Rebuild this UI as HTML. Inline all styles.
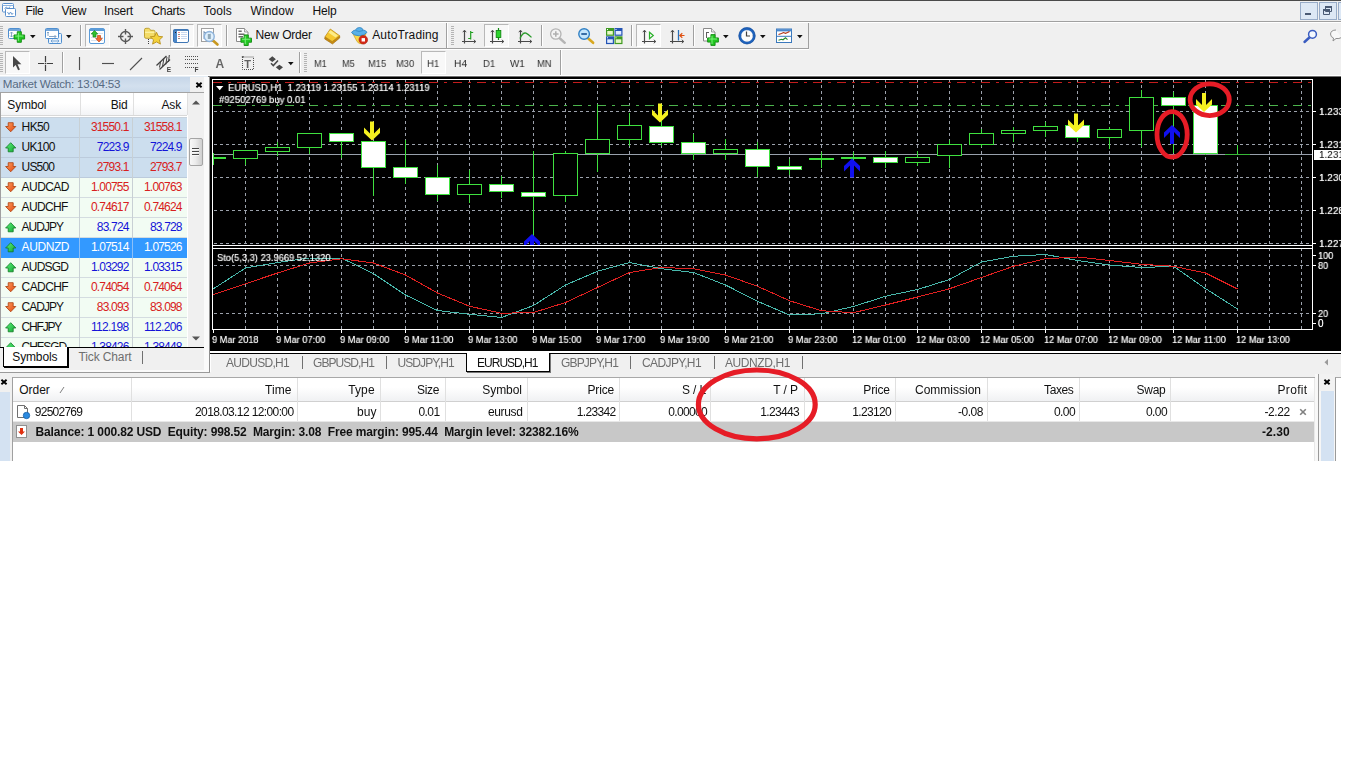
<!DOCTYPE html>
<html><head><meta charset="utf-8"><title>MetaTrader 4</title>
<style>
html,body{margin:0;padding:0;background:#fff;}
body{width:1360px;height:768px;overflow:hidden;position:relative;font-family:"Liberation Sans",sans-serif;}
#app{position:absolute;left:0;top:0;width:1341px;height:461px;background:#f0f0f0;overflow:hidden;}
.t{position:absolute;white-space:pre;}
.ct{text-shadow:0 0 .7px rgba(255,255,255,.75);}
.b{position:absolute;box-sizing:border-box;}
svg{position:absolute;overflow:visible;}
svg text{font-family:"Liberation Sans",sans-serif;}
</style></head><body><div id="app">
<div class="b " style="left:0px;top:0px;width:1341px;height:1px;background:#4a4a4a;"></div>
<div class="b " style="left:0px;top:21px;width:1341px;height:1px;background:#a0a0a0;"></div>
<div class="b " style="left:0px;top:22px;width:1341px;height:1px;background:#ffffff;"></div>
<div class="t " style="left:25.60px;top:4.00px;font-size:12px;line-height:14.00px;color:#111;letter-spacing:-0.434px;">File</div>
<div class="t " style="left:61.50px;top:4.00px;font-size:12px;line-height:14.00px;color:#111;letter-spacing:-0.323px;">View</div>
<div class="t " style="left:104.00px;top:4.00px;font-size:12px;line-height:14.00px;color:#111;letter-spacing:-0.169px;">Insert</div>
<div class="t " style="left:151.50px;top:4.00px;font-size:12px;line-height:14.00px;color:#111;letter-spacing:-0.307px;">Charts</div>
<div class="t " style="left:203.50px;top:4.00px;font-size:12px;line-height:14.00px;color:#111;letter-spacing:0.077px;">Tools</div>
<div class="t " style="left:250.60px;top:4.00px;font-size:12px;line-height:14.00px;color:#111;letter-spacing:0.087px;">Window</div>
<div class="t " style="left:312.50px;top:4.00px;font-size:12px;line-height:14.00px;color:#111;letter-spacing:-0.170px;">Help</div>
<div class="b " style="left:1300px;top:2px;width:18px;height:18px;background:#dde8f5;border:1px solid #98acc8;"></div>
<div class="b " style="left:1319px;top:2px;width:18px;height:18px;background:#dde8f5;border:1px solid #98acc8;"></div>
<div class="b " style="left:1338px;top:2px;width:6px;height:18px;background:#dde8f5;border:1px solid #98acc8;"></div>
<div class="b " style="left:1305px;top:13px;width:6px;height:2px;background:#4a5a74;"></div>
<svg style="left:1322px;top:5px" width="12" height="12"><path d="M3.5 1.5h6v5h-6z M1.5 4.5h6v5h-6z" fill="#dbe6f4" stroke="#4a5a74" stroke-width="1"/><path d="M3 2h7M1 5h7" stroke="#4a5a74" stroke-width="2"/></svg>
<div class="b " style="left:0px;top:48px;width:809px;height:1px;background:#a0a0a0;"></div>
<div class="b " style="left:0px;top:49px;width:809px;height:1px;background:#ffffff;"></div>
<div class="b " style="left:808px;top:23px;width:1px;height:26px;background:#a0a0a0;"></div>
<div class="b " style="left:560px;top:50px;width:1px;height:25px;background:#a0a0a0;"></div>
<div class="b " style="left:561px;top:50px;width:1px;height:25px;background:#ffffff;"></div>
<div class="b " style="left:0px;top:75px;width:1341px;height:1px;background:#ffffff;"></div>
<div class="b " style="left:0px;top:76px;width:208px;height:1px;background:#e4ecf4;"></div>
<div class="b " style="left:208px;top:76px;width:1133px;height:1px;background:#707070;"></div>
<div class="b " style="left:0px;top:26px;width:3px;height:1px;background:#b4b4b4;"></div>
<div class="b " style="left:0px;top:28px;width:3px;height:1px;background:#b4b4b4;"></div>
<div class="b " style="left:0px;top:30px;width:3px;height:1px;background:#b4b4b4;"></div>
<div class="b " style="left:0px;top:32px;width:3px;height:1px;background:#b4b4b4;"></div>
<div class="b " style="left:0px;top:34px;width:3px;height:1px;background:#b4b4b4;"></div>
<div class="b " style="left:0px;top:36px;width:3px;height:1px;background:#b4b4b4;"></div>
<div class="b " style="left:0px;top:38px;width:3px;height:1px;background:#b4b4b4;"></div>
<div class="b " style="left:0px;top:40px;width:3px;height:1px;background:#b4b4b4;"></div>
<div class="b " style="left:0px;top:42px;width:3px;height:1px;background:#b4b4b4;"></div>
<div class="b " style="left:0px;top:44px;width:3px;height:1px;background:#b4b4b4;"></div>
<div class="b " style="left:451px;top:26px;width:3px;height:1px;background:#b4b4b4;"></div>
<div class="b " style="left:451px;top:28px;width:3px;height:1px;background:#b4b4b4;"></div>
<div class="b " style="left:451px;top:30px;width:3px;height:1px;background:#b4b4b4;"></div>
<div class="b " style="left:451px;top:32px;width:3px;height:1px;background:#b4b4b4;"></div>
<div class="b " style="left:451px;top:34px;width:3px;height:1px;background:#b4b4b4;"></div>
<div class="b " style="left:451px;top:36px;width:3px;height:1px;background:#b4b4b4;"></div>
<div class="b " style="left:451px;top:38px;width:3px;height:1px;background:#b4b4b4;"></div>
<div class="b " style="left:451px;top:40px;width:3px;height:1px;background:#b4b4b4;"></div>
<div class="b " style="left:451px;top:42px;width:3px;height:1px;background:#b4b4b4;"></div>
<div class="b " style="left:451px;top:44px;width:3px;height:1px;background:#b4b4b4;"></div>
<div class="b " style="left:0px;top:53px;width:3px;height:1px;background:#b4b4b4;"></div>
<div class="b " style="left:0px;top:55px;width:3px;height:1px;background:#b4b4b4;"></div>
<div class="b " style="left:0px;top:57px;width:3px;height:1px;background:#b4b4b4;"></div>
<div class="b " style="left:0px;top:59px;width:3px;height:1px;background:#b4b4b4;"></div>
<div class="b " style="left:0px;top:61px;width:3px;height:1px;background:#b4b4b4;"></div>
<div class="b " style="left:0px;top:63px;width:3px;height:1px;background:#b4b4b4;"></div>
<div class="b " style="left:0px;top:65px;width:3px;height:1px;background:#b4b4b4;"></div>
<div class="b " style="left:0px;top:67px;width:3px;height:1px;background:#b4b4b4;"></div>
<div class="b " style="left:0px;top:69px;width:3px;height:1px;background:#b4b4b4;"></div>
<div class="b " style="left:0px;top:71px;width:3px;height:1px;background:#b4b4b4;"></div>
<div class="b " style="left:304px;top:53px;width:3px;height:1px;background:#b4b4b4;"></div>
<div class="b " style="left:304px;top:55px;width:3px;height:1px;background:#b4b4b4;"></div>
<div class="b " style="left:304px;top:57px;width:3px;height:1px;background:#b4b4b4;"></div>
<div class="b " style="left:304px;top:59px;width:3px;height:1px;background:#b4b4b4;"></div>
<div class="b " style="left:304px;top:61px;width:3px;height:1px;background:#b4b4b4;"></div>
<div class="b " style="left:304px;top:63px;width:3px;height:1px;background:#b4b4b4;"></div>
<div class="b " style="left:304px;top:65px;width:3px;height:1px;background:#b4b4b4;"></div>
<div class="b " style="left:304px;top:67px;width:3px;height:1px;background:#b4b4b4;"></div>
<div class="b " style="left:304px;top:69px;width:3px;height:1px;background:#b4b4b4;"></div>
<div class="b " style="left:304px;top:71px;width:3px;height:1px;background:#b4b4b4;"></div>
<div class="b " style="left:80px;top:25px;width:1px;height:21px;background:#a0a0a0;"></div>
<div class="b " style="left:81px;top:25px;width:1px;height:21px;background:#ffffff;"></div>
<div class="b " style="left:226px;top:25px;width:1px;height:21px;background:#a0a0a0;"></div>
<div class="b " style="left:227px;top:25px;width:1px;height:21px;background:#ffffff;"></div>
<div class="b " style="left:541px;top:25px;width:1px;height:21px;background:#a0a0a0;"></div>
<div class="b " style="left:542px;top:25px;width:1px;height:21px;background:#ffffff;"></div>
<div class="b " style="left:631px;top:25px;width:1px;height:21px;background:#a0a0a0;"></div>
<div class="b " style="left:632px;top:25px;width:1px;height:21px;background:#ffffff;"></div>
<div class="b " style="left:693px;top:25px;width:1px;height:21px;background:#a0a0a0;"></div>
<div class="b " style="left:694px;top:25px;width:1px;height:21px;background:#ffffff;"></div>
<div class="b " style="left:446px;top:23px;width:1px;height:25px;background:#a0a0a0;"></div>
<div class="b " style="left:447px;top:23px;width:1px;height:25px;background:#ffffff;"></div>
<div class="b " style="left:62px;top:52px;width:1px;height:21px;background:#a0a0a0;"></div>
<div class="b " style="left:63px;top:52px;width:1px;height:21px;background:#ffffff;"></div>
<div class="b " style="left:299px;top:52px;width:1px;height:21px;background:#a0a0a0;"></div>
<div class="b " style="left:300px;top:52px;width:1px;height:21px;background:#ffffff;"></div>
<div class="b " style="left:85px;top:24px;width:25px;height:23px;background:#f8f8f8;border:1px solid #b8b8b8;border-right-color:#fff;border-bottom-color:#fff;"></div>
<div class="b " style="left:170px;top:24px;width:24px;height:23px;background:#f8f8f8;border:1px solid #b8b8b8;border-right-color:#fff;border-bottom-color:#fff;"></div>
<div class="b " style="left:197px;top:24px;width:25px;height:23px;background:#f8f8f8;border:1px solid #b8b8b8;border-right-color:#fff;border-bottom-color:#fff;"></div>
<div class="b " style="left:484px;top:24px;width:25px;height:23px;background:#f8f8f8;border:1px solid #b8b8b8;border-right-color:#fff;border-bottom-color:#fff;"></div>
<div class="b " style="left:636px;top:24px;width:25px;height:23px;background:#f8f8f8;border:1px solid #b8b8b8;border-right-color:#fff;border-bottom-color:#fff;"></div>
<div class="b " style="left:5px;top:51px;width:25px;height:23px;background:#f8f8f8;border:1px solid #b8b8b8;border-right-color:#fff;border-bottom-color:#fff;"></div>
<div class="b " style="left:421px;top:51px;width:25px;height:23px;background:#f8f8f8;border:1px solid #b8b8b8;border-right-color:#fff;border-bottom-color:#fff;"></div>
<div class="t " style="left:255.60px;top:28.00px;font-size:12px;line-height:14.00px;color:#111;letter-spacing:-0.190px;">New Order</div>
<div class="t " style="left:372.20px;top:28.00px;font-size:12px;line-height:14.00px;color:#111;letter-spacing:0.143px;">AutoTrading</div>
<div class="t " style="left:314.00px;top:58.00px;font-size:10px;line-height:11.00px;color:#2c2c2c;will-change:transform;transform:scale(0.9214,0.8750);transform-origin:0 9px;">M1</div>
<div class="t " style="left:342.00px;top:58.00px;font-size:10px;line-height:11.00px;color:#2c2c2c;will-change:transform;transform:scale(0.9214,0.8750);transform-origin:0 9px;">M5</div>
<div class="t " style="left:367.70px;top:58.00px;font-size:10px;line-height:11.00px;color:#2c2c2c;will-change:transform;transform:scale(0.9304,0.8750);transform-origin:0 9px;">M15</div>
<div class="t " style="left:396.20px;top:58.00px;font-size:10px;line-height:11.00px;color:#2c2c2c;will-change:transform;transform:scale(0.9304,0.8750);transform-origin:0 9px;">M30</div>
<div class="t " style="left:426.70px;top:58.00px;font-size:10px;line-height:11.00px;color:#2c2c2c;will-change:transform;transform:scale(0.9465,0.8750);transform-origin:0 9px;">H1</div>
<div class="t " style="left:453.70px;top:58.00px;font-size:10px;line-height:11.00px;color:#2c2c2c;will-change:transform;transform:scale(1.0248,0.8750);transform-origin:0 9px;">H4</div>
<div class="t " style="left:483.20px;top:58.00px;font-size:10px;line-height:11.00px;color:#2c2c2c;will-change:transform;transform:scale(0.9465,0.8750);transform-origin:0 9px;">D1</div>
<div class="t " style="left:510.20px;top:58.00px;font-size:10px;line-height:11.00px;color:#2c2c2c;will-change:transform;transform:scale(0.9733,0.8750);transform-origin:0 9px;">W1</div>
<div class="t " style="left:537.20px;top:58.00px;font-size:10px;line-height:11.00px;color:#2c2c2c;will-change:transform;transform:scale(0.9388,0.8750);transform-origin:0 9px;">MN</div>
<svg style="left:30px;top:35px" width="6" height="4"><path d="M0 0h5.600l-2.800 3.200z" fill="#111"/></svg>
<svg style="left:66px;top:35px" width="6" height="4"><path d="M0 0h5.600l-2.800 3.200z" fill="#111"/></svg>
<svg style="left:722.7px;top:35px" width="6" height="4"><path d="M0 0h5.600l-2.800 3.200z" fill="#111"/></svg>
<svg style="left:760px;top:35px" width="6" height="4"><path d="M0 0h5.600l-2.800 3.200z" fill="#111"/></svg>
<svg style="left:797px;top:35px" width="6" height="4"><path d="M0 0h5.600l-2.800 3.200z" fill="#111"/></svg>
<svg style="left:287.8px;top:62px" width="6" height="4"><path d="M0 0h5.600l-2.800 3.200z" fill="#111"/></svg>
<svg style="left:1300px;top:26px" width="41" height="20"><path d="M10.500 10.500l-6 5.500" stroke="#3a5cc0" stroke-width="2.400" stroke-linecap="round"/><circle cx="12.500" cy="8.300" r="3.900" fill="#f4f8ff" stroke="#3a5cc0" stroke-width="1.500"/><path d="M36 4q-5 0-5.500 4q0 3 3 4l-.5 3 3-2.500q3 .5 5.500-1" fill="#f8f8f8" stroke="#909090" stroke-width="1"/></svg>
<svg style="left:0;top:0" width="1341" height="78"><g stroke="#5a8fcc" fill="#fff" stroke-width="1"><rect x="2.5" y="3.5" width="11" height="8.5" rx="1"/><path d="M2.5 5.5h11" stroke="#8db4e0"/><path d="M4.5 8.5l2-1.5 1.5 2 2-2.5" fill="none" stroke-width=".9"/><rect x="5.5" y="8.5" width="10" height="8" rx="1"/><path d="M7.5 12l1.5 2.5 1.5-2.5 1.5 2.5 1.2-1.5" fill="none" stroke-width=".9"/></g><rect x="8.5" y="28.5" width="12" height="10" rx="1" fill="#fff" stroke="#4f8fd0"/><path d="M8.5 30h12" stroke="#4f8fd0" stroke-width="1.6"/><path d="M11.5 32v5M10 33.5l1.5-1.5 1.5 1.5M10 35.5l1.5 1.5 1.5-1.5" stroke="#7a9cc0" fill="none" stroke-width=".9"/><path d="M17.25 31.7h4.1v3.25h3.25v4.1h-3.25v3.25h-4.1v-3.25h-3.25v-4.1h3.25z" fill="#22c822" stroke="#128a12" stroke-width=".9"/><path d="M15.2 36.05h8M18.35 32.9v8" stroke="#7cf07c" stroke-width="1" fill="none"/><rect x="48.5" y="33.5" width="13" height="10" rx="1" fill="#e8f2fc" stroke="#4f8fd0"/><path d="M51 41h8M51 41l1.5-1.5M51 41l1.5 1.5M59 41l-1.5-1.5M59 41l-1.5 1.5" stroke="#6f9fd0" stroke-width=".9" fill="none"/><rect x="45.5" y="28.5" width="13" height="10" rx="1" fill="#fff" stroke="#4f8fd0"/><path d="M45.500 30h13" stroke="#4f8fd0" stroke-width="1.6"/><path d="M48 32v4M47 33l1-1 1 1M49 36.500h7M56 36.500l-1.500-1.500M56 36.500l-1.500 1.500" stroke="#7a9cc0" stroke-width=".9" fill="none"/><rect x="89.500" y="28.500" width="15" height="15" rx="1.500" fill="#fff" stroke="#5b9bd8"/><path d="M89.500 30h15" stroke="#5b9bd8" stroke-width="2"/><path d="M91 37.500h12M91 40.500h12M98 33.500h5" stroke="#d8e2ee" stroke-width="1"/><path d="M93 37v-3h-1.800l3.300-3.500 3.300 3.500h-1.800v3z" fill="#2fc02f" stroke="#188a18" stroke-width=".7"/><path d="M97.500 35.500v3h-1.800l3.300 3.500 3.300-3.500h-1.800v-3z" fill="#f46a30" stroke="#c04818" stroke-width=".7"/><g stroke="#585858" fill="none"><circle cx="125.500" cy="36.500" r="5" stroke-width="1.300"/><path d="M118 36.500h5.500M127.500 36.500h5.500M125.500 29v5.500M125.500 38.500v5.500" stroke-width="1.400"/></g><path d="M144.500 29.800q0-1.500 1.500-1.500h2.500q1 0 1.500 1l.5 1h3q1.500 0 1.500 1.500v5q0 1.500-1.500 1.500h-7.500q-1.500 0-1.500-1.500z" fill="#f4dc68" stroke="#b89a2a" stroke-width=".9"/><path d="M145 32.300h9.500" stroke="#fdf3a8" stroke-width="1.200"/><path d="M156.500 32.300l1.900 4 4.300.5-3.200 3 .9 4.300-3.900-2.200-3.900 2.200.9-4.300-3.200-3 4.300-.5z" fill="#f4d23c" stroke="#b8901c" stroke-width=".9"/><path d="M148.500 39v1M148.500 41v1M148.500 43v1" stroke="#404040" stroke-width="1"/><rect x="173.500" y="29.500" width="15" height="13" rx="1.500" fill="#fff" stroke="#3f76b4"/><rect x="174" y="30" width="3" height="12" fill="#4a86c8"/><path d="M173.500 30.200h15" stroke="#3f76b4" stroke-width="1.400"/><path d="M181 32.500h6M181 34.500h6M181 36.500h6M181 38.500h6" stroke="#c8d8f0" stroke-width="1"/><path d="M178.500 32.500h1M178.500 36.500h1" stroke="#d02020" stroke-width="1.200"/><path d="M178.500 34.500h1M178.500 38.500h1M175 32.500h1" stroke="#202020" stroke-width="1.200"/><rect x="201.500" y="28.500" width="12" height="13" fill="#fff" stroke="#a0a0a0"/><path d="M204 31v8M204 32.500h7M210 31l1.500 1.500-1.500 1.500" stroke="#7090b0" fill="none" stroke-width=".9"/><path d="M213 40.500l4.500 4" stroke="#c89820" stroke-width="2.600" stroke-linecap="round"/><circle cx="209.300" cy="36.500" r="5" fill="#d8ecfc" fill-opacity=".85" stroke="#8fb4dc" stroke-width="1.300"/><rect x="207.800" y="34" width="3" height="5" fill="#90a8b8"/><path d="M236.5 28.5h8l3.500 3.500v9.5h-11.5z" fill="#fff" stroke="#8a8a8a" stroke-width="1"/><path d="M244.5 28.5v3.500h3.500" fill="#e8e8e8" stroke="#8a8a8a" stroke-width=".8"/><path d="M238.500 31.300h3.200M238.500 34.300h6M238.500 36.800h4.500" stroke="#6c6c6c" stroke-width="1.500"/><path d="M244.15 34.9h4.1v3.25h3.25v4.1h-3.25v3.25h-4.1v-3.25h-3.25v-4.1h3.25z" fill="#22c822" stroke="#128a12" stroke-width=".9"/><path d="M242.1 39.25h8M245.25 36.1v8" stroke="#7cf07c" stroke-width="1" fill="none"/><path d="M325 36.800l7.200 4.700 7.500-5.700v2.200l-7.200 6-7.800-5z" fill="#c88c12" stroke="#9a6808" stroke-width=".6" stroke-linejoin="round"/><path d="M330.300 29l9.400 6.800-7.500 5.700-7.200-4.700z" fill="#f6c830" stroke="#b88410" stroke-width=".7" stroke-linejoin="round"/><path d="M330.600 30.300l7.300 5.300-2.300 1.800-7.300-4.800z" fill="#fdec88"/><path d="M352.500 33l4.500 8.500q2 3 5.500 2l3.500-10z" fill="#f8d84a" stroke="#d0a020" stroke-width=".7"/><path d="M351.500 32.500q1-2 4-2.500q1-2.500 4-2.500t3.500 2.500q3 .3 4 2.300q-2.500 3.500-7.800 3.500t-7.700-3.300z" fill="#58b0e8" stroke="#2a80c0" stroke-width=".8"/><path d="M355.500 30.500q3.500 2 7.500 0" stroke="#2a80c0" fill="none" stroke-width=".7"/><circle cx="363.300" cy="39.800" r="4.300" fill="#d42818" stroke="#a81808" stroke-width=".6"/><rect x="361.600" y="38.100" width="3.400" height="3.400" fill="#fff"/><g stroke="#484848" fill="none" stroke-width="1.200"><path d="M464.5 30.500v13M462 41.5h13.500"/><path d="M462.8 32.200l1.700-2 1.700 2M473.8 39.8l2 1.700-2 1.700" stroke-width="1"/></g><path d="M470.700 31v8.500M470.700 32.500h2.500M470.700 38.500h-2.500" stroke="#22a022" stroke-width="1.200" fill="none"/><g stroke="#484848" fill="none" stroke-width="1.200"><path d="M492.5 30.500v13M490 41.5h13.500"/><path d="M490.8 32.200l1.700-2 1.700 2M501.8 39.8l2 1.700-2 1.700" stroke-width="1"/></g><path d="M498.500 28v12" stroke="#128a12" stroke-width="1.200"/><rect x="496.200" y="30.500" width="4.600" height="7" fill="#2cd42c" stroke="#128a12" stroke-width=".9"/><g stroke="#484848" fill="none" stroke-width="1.200"><path d="M520.5 30.500v13M518 41.5h13.500"/><path d="M518.8 32.200l1.700-2 1.700 2M529.8 39.8l2 1.700-2 1.700" stroke-width="1"/></g><path d="M520 38.500q3-6.500 6-5.300q2 .8 5.500 4.200" stroke="#2a9a2a" stroke-width="1.300" fill="none"/><path d="M560 38.500l4.800 4.300" stroke="#b4b4b4" stroke-width="2.400" stroke-linecap="round"/><circle cx="555.800" cy="34" r="5.200" fill="#f4f4f4" stroke="#b4b4b4" stroke-width="1.300"/><path d="M553 34h5.600M555.800 31.200v5.600" stroke="#b0b0b0" stroke-width="1.600"/><path d="M588.300 38.500l4.800 4.300" stroke="#d8a820" stroke-width="2.600" stroke-linecap="round"/><circle cx="584.100" cy="34" r="5.300" fill="#c4e6fc" stroke="#3080c4" stroke-width="1.400"/><path d="M581.300 34h5.600" stroke="#28609c" stroke-width="1.800"/><rect x="606" y="28" width="8" height="7.800" fill="#3f9a22"/><rect x="607.2" y="31" width="5.600" height="3.600" fill="#e8f8c8"/><rect x="607" y="29" width="1" height="1" fill="#fff"/><rect x="614.5" y="28" width="8" height="7.800" fill="#2454b4"/><rect x="615.7" y="31" width="5.600" height="3.600" fill="#e0ecff"/><rect x="615.5" y="29" width="1" height="1" fill="#fff"/><rect x="606" y="36.3" width="8" height="7.800" fill="#2454b4"/><rect x="607.2" y="39.3" width="5.600" height="3.600" fill="#e0ecff"/><rect x="607" y="37.3" width="1" height="1" fill="#fff"/><rect x="614.5" y="36.3" width="8" height="7.800" fill="#3f9a22"/><rect x="615.7" y="39.3" width="5.600" height="3.600" fill="#e8f8c8"/><rect x="615.5" y="37.3" width="1" height="1" fill="#fff"/><g stroke="#484848" fill="none" stroke-width="1.200"><path d="M644.5 30.500v13M642 41.5h13.500"/><path d="M642.8 32.200l1.700-2 1.700 2M653.8 39.8l2 1.700-2 1.700" stroke-width="1"/></g><path d="M649.500 32.200l3.800 3.300-3.800 3.300z" fill="none" stroke="#28b028" stroke-width="1.200"/><g stroke="#484848" fill="none" stroke-width="1.200"><path d="M672.5 30.500v13M670 41.5h13.500"/><path d="M670.8 32.200l1.700-2 1.700 2M681.8 39.8l2 1.700-2 1.700" stroke-width="1"/></g><path d="M678.500 30v10.500" stroke="#2a70b8" stroke-width="1.300"/><path d="M684.500 35.500h-4.500M682.300 33.200l-2.500 2.300 2.500 2.300" stroke="#e05010" stroke-width="1.200" fill="none"/><path d="M703.5 28.5h8l3.500 3.500v9h-11.5z" fill="#fff" stroke="#8a8a8a" stroke-width="1"/><path d="M711.5 28.5v3.500h3.500" fill="#e8e8e8" stroke="#8a8a8a" stroke-width=".8"/><path d="M706.500 32v6M706.500 32.500h2.500" stroke="#606060" stroke-width="1" fill="none"/><path d="M710.9 34.6h4.2v3.3h3.3v4.2h-3.3v3.3h-4.2v-3.3h-3.3v-4.2h3.3z" fill="#22c822" stroke="#128a12" stroke-width=".9"/><path d="M708.8 39h8.2M712 35.8v8.2" stroke="#7cf07c" stroke-width="1" fill="none"/><circle cx="747" cy="35.800" r="7.200" fill="#fcfcfc" stroke="#1e62bc" stroke-width="2.600"/><circle cx="747" cy="35.800" r="8.200" fill="none" stroke="#164a94" stroke-width=".5"/><path d="M746.500 31.500v4.500h3.500" stroke="#404040" stroke-width="1.200" fill="none"/><path d="M747 29.800v1M747 40.800v1M741 35.800h1M752 35.800h1" stroke="#a0a8b8" stroke-width=".9"/><rect x="776.500" y="29" width="15" height="13.500" fill="#fff" stroke="#3a78bc" stroke-width="1"/><path d="M776.500 30.300h15" stroke="#4a88cc" stroke-width="2.200"/><path d="M776.500 36.300h15" stroke="#3a78bc" stroke-width="1"/><path d="M778.500 34.500l3-1 2-1 2 .8 2-.8 2-1" stroke="#b03010" stroke-width="1.100" fill="none"/><path d="M778.500 40.300l3-1 1.500.5 2.500-2 2 1.800" stroke="#2a8a2a" stroke-width="1.100" fill="none"/><path d="M13 56v11.500l2.700-2.600 2.400 5.300 1.800-.8-2.400-5.200h3.900z" fill="#484848"/><path d="M38 63.500h6.300M46.700 63.500h6.300M45.500 56v6.300M45.500 64.700v6.300" stroke="#404040" stroke-width="1.200"/><rect x="45" y="63" width="1" height="1" fill="#404040"/><path d="M79.500 57v13" stroke="#505050" stroke-width="1.150"/><path d="M102 63.500h12" stroke="#505050" stroke-width="1.150"/><path d="M130 70l12-12" stroke="#505050" stroke-width="1.100"/><g stroke="#404040" stroke-width="1.300" fill="none"><path d="M156.500 65.500l10-9.500M159.500 69.500l10.500-10"/><path d="M159.500 67.500l1.200-6.500M162.500 66.500l1.400-8M165.800 64.500l1.200-7.500M168.500 62l.8-7" stroke-width="1"/></g><text x="166.800" y="72.200" font-size="6.500" font-weight="bold" fill="#404040">E</text><path d="M185 56.5H198" stroke="#505050" stroke-width="1" stroke-dasharray="1 1"/><path d="M185 59.5H198" stroke="#505050" stroke-width="1" stroke-dasharray="1 1"/><path d="M185 63.5H198" stroke="#505050" stroke-width="1" stroke-dasharray="1 1"/><path d="M185 67.5H194" stroke="#505050" stroke-width="1" stroke-dasharray="1 1"/><text x="194.600" y="72" font-size="6.500" font-weight="bold" fill="#404040">F</text><text x="215.500" y="67.600" font-size="12" font-weight="bold" fill="#666">A</text><rect x="242.500" y="57" width="11" height="12.500" fill="none" stroke="#505050" stroke-width="1" stroke-dasharray="1 1"/><rect x="241.800" y="56.200" width="2" height="1.300" fill="#505050"/><text x="244.200" y="67.600" font-size="11" font-weight="bold" fill="#606060">T</text><path d="M272.300 56.300l3.600 3-3.600 2.600-3.600-2.600zM279.400 70.300l3.600-3-3.600-2.600-3.600 2.600z" fill="#484848"/><path d="M271 63.300l2.300 2.300 4.700-5.200" stroke="#484848" stroke-width="1.500" fill="none"/></svg>
<svg width="0" height="0" style="left:0;top:0"><defs><linearGradient id="gd" x1="0" y1="0" x2="1" y2="1"><stop offset="0" stop-color="#ff9a5c"/><stop offset="1" stop-color="#e04a10"/></linearGradient><linearGradient id="gu" x1="0" y1="0" x2="1" y2="1"><stop offset="0" stop-color="#5cf07c"/><stop offset="1" stop-color="#14a834"/></linearGradient></defs></svg>
<div class="b" style="left:0;top:77px;width:190px;height:15px;background:linear-gradient(#c6d6e8,#d3e0ee 60%,#cbdaea);"></div>
<div class="b " style="left:190px;top:77px;width:19px;height:15px;background:#f0f0f0;"></div>
<div class="t " style="left:2.80px;top:78.00px;font-size:11.6px;line-height:12.00px;color:#566a82;letter-spacing:-0.237px;">Market Watch: 13:04:53</div>
<svg style="left:194.1px;top:79.5px" width="10" height="10"><path d="M2.4 2.7L7.6 7.3M7.6 2.7L2.4 7.3" stroke="#000" stroke-width="1.9" fill="none"/></svg>
<div class="b " style="left:0px;top:92px;width:206px;height:280px;background:#ffffff;"></div>
<div class="b " style="left:0px;top:92px;width:204px;height:1px;background:#a4a4a4;"></div>
<div class="b " style="left:0px;top:92px;width:1px;height:280px;background:#a0a0a0;"></div>
<div class="b " style="left:204px;top:77px;width:5px;height:295px;background:#fafafa;"></div>
<div class="b " style="left:209px;top:77px;width:1px;height:296px;background:#8e8e8e;"></div>
<div class="b" style="left:1px;top:93px;width:186px;height:23px;background:linear-gradient(#ffffff,#ffffff 45%,#f3f4f6);border-bottom:1px solid #d8d8d8;"></div>
<div class="b " style="left:80px;top:93px;width:1px;height:22px;background:#e0e0e0;"></div>
<div class="b " style="left:133px;top:93px;width:1px;height:22px;background:#e0e0e0;"></div>
<div class="b " style="left:187px;top:93px;width:1px;height:22px;background:#e0e0e0;"></div>
<div class="b " style="left:1px;top:117px;width:186px;height:1px;background:#c8d2dc;"></div>
<div class="t " style="left:7.30px;top:98.00px;font-size:12px;line-height:14.00px;color:#111;letter-spacing:-0.169px;">Symbol</div>
<div class="t " style="left:110.80px;top:98.00px;font-size:12px;line-height:14.00px;color:#111;letter-spacing:-0.281px;">Bid</div>
<div class="t " style="left:161.50px;top:98.00px;font-size:12px;line-height:14.00px;color:#111;letter-spacing:-0.168px;">Ask</div>
<div class="b" style="left:1px;top:118px;width:186px;height:229px;overflow:hidden;">
<div class="b " style="left:0px;top:0px;width:186px;height:20px;background:#ccdeee;"></div>
<div class="b " style="left:0px;top:19px;width:186px;height:1px;background:#bccbdc;"></div>
<div class="b " style="left:78px;top:0px;width:1px;height:20px;background:#c8d0d4;"></div>
<div class="b " style="left:131px;top:0px;width:1px;height:20px;background:#c8d0d4;"></div>
<div class="t " style="left:20.60px;top:2.00px;font-size:12px;line-height:14.00px;color:#111;letter-spacing:-0.629px;">HK50</div>
<div class="t " style="left:89.90px;top:2.00px;font-size:12px;line-height:14.00px;color:#d82020;letter-spacing:-0.811px;">31550.1</div>
<div class="t " style="left:143.00px;top:2.00px;font-size:12px;line-height:14.00px;color:#d82020;letter-spacing:-0.811px;">31558.1</div>
<svg style="left:4px;top:4px" width="12" height="11"><path d="M3.200 .700h5v3.800h2.600L5.700 9.800 .600 4.500h2.600z" fill="url(#gd)" stroke="#a83c0c" stroke-width=".8" stroke-linejoin="round"/></svg>
<div class="b " style="left:0px;top:20px;width:186px;height:20px;background:#ccdeee;"></div>
<div class="b " style="left:0px;top:39px;width:186px;height:1px;background:#bccbdc;"></div>
<div class="b " style="left:78px;top:20px;width:1px;height:20px;background:#c8d0d4;"></div>
<div class="b " style="left:131px;top:20px;width:1px;height:20px;background:#c8d0d4;"></div>
<div class="t " style="left:20.60px;top:22.00px;font-size:12px;line-height:14.00px;color:#111;letter-spacing:-0.738px;">UK100</div>
<div class="t " style="left:95.85px;top:22.00px;font-size:12px;line-height:14.00px;color:#1414d8;letter-spacing:-0.826px;">7223.9</div>
<div class="t " style="left:148.95px;top:22.00px;font-size:12px;line-height:14.00px;color:#1414d8;letter-spacing:-0.826px;">7224.9</div>
<svg style="left:4px;top:24px" width="12" height="11"><path d="M3.200 9.800h5V6h2.600L5.700 .700 .600 6h2.600z" fill="url(#gu)" stroke="#0e7a22" stroke-width=".8" stroke-linejoin="round"/></svg>
<div class="b " style="left:0px;top:40px;width:186px;height:20px;background:#ccdeee;"></div>
<div class="b " style="left:0px;top:59px;width:186px;height:1px;background:#bccbdc;"></div>
<div class="b " style="left:78px;top:40px;width:1px;height:20px;background:#c8d0d4;"></div>
<div class="b " style="left:131px;top:40px;width:1px;height:20px;background:#c8d0d4;"></div>
<div class="t " style="left:20.60px;top:42.00px;font-size:12px;line-height:14.00px;color:#111;letter-spacing:-0.838px;">US500</div>
<div class="t " style="left:95.85px;top:42.00px;font-size:12px;line-height:14.00px;color:#d82020;letter-spacing:-0.826px;">2793.1</div>
<div class="t " style="left:148.95px;top:42.00px;font-size:12px;line-height:14.00px;color:#d82020;letter-spacing:-0.826px;">2793.7</div>
<svg style="left:4px;top:44px" width="12" height="11"><path d="M3.200 .700h5v3.800h2.600L5.700 9.800 .600 4.500h2.600z" fill="url(#gd)" stroke="#a83c0c" stroke-width=".8" stroke-linejoin="round"/></svg>
<div class="b " style="left:0px;top:60px;width:186px;height:20px;background:#f2fcf3;"></div>
<div class="b " style="left:0px;top:79px;width:186px;height:1px;background:#d4dce0;"></div>
<div class="b " style="left:78px;top:60px;width:1px;height:20px;background:#c8d0d4;"></div>
<div class="b " style="left:131px;top:60px;width:1px;height:20px;background:#c8d0d4;"></div>
<div class="t " style="left:20.60px;top:62.00px;font-size:12px;line-height:14.00px;color:#111;letter-spacing:-0.562px;">AUDCAD</div>
<div class="t " style="left:89.90px;top:62.00px;font-size:12px;line-height:14.00px;color:#d82020;letter-spacing:-0.811px;">1.00755</div>
<div class="t " style="left:143.00px;top:62.00px;font-size:12px;line-height:14.00px;color:#d82020;letter-spacing:-0.811px;">1.00763</div>
<svg style="left:4px;top:64px" width="12" height="11"><path d="M3.200 .700h5v3.800h2.600L5.700 9.800 .600 4.500h2.600z" fill="url(#gd)" stroke="#a83c0c" stroke-width=".8" stroke-linejoin="round"/></svg>
<div class="b " style="left:0px;top:80px;width:186px;height:20px;background:#f2fcf3;"></div>
<div class="b " style="left:0px;top:99px;width:186px;height:1px;background:#d4dce0;"></div>
<div class="b " style="left:78px;top:80px;width:1px;height:20px;background:#c8d0d4;"></div>
<div class="b " style="left:131px;top:80px;width:1px;height:20px;background:#c8d0d4;"></div>
<div class="t " style="left:20.60px;top:82.00px;font-size:12px;line-height:14.00px;color:#111;letter-spacing:-0.666px;">AUDCHF</div>
<div class="t " style="left:89.90px;top:82.00px;font-size:12px;line-height:14.00px;color:#d82020;letter-spacing:-0.811px;">0.74617</div>
<div class="t " style="left:143.00px;top:82.00px;font-size:12px;line-height:14.00px;color:#d82020;letter-spacing:-0.811px;">0.74624</div>
<svg style="left:4px;top:84px" width="12" height="11"><path d="M3.200 .700h5v3.800h2.600L5.700 9.800 .600 4.500h2.600z" fill="url(#gd)" stroke="#a83c0c" stroke-width=".8" stroke-linejoin="round"/></svg>
<div class="b " style="left:0px;top:100px;width:186px;height:20px;background:#f2fcf3;"></div>
<div class="b " style="left:0px;top:119px;width:186px;height:1px;background:#d4dce0;"></div>
<div class="b " style="left:78px;top:100px;width:1px;height:20px;background:#c8d0d4;"></div>
<div class="b " style="left:131px;top:100px;width:1px;height:20px;background:#c8d0d4;"></div>
<div class="t " style="left:20.60px;top:102.00px;font-size:12px;line-height:14.00px;color:#111;letter-spacing:-0.974px;">AUDJPY</div>
<div class="t " style="left:95.85px;top:102.00px;font-size:12px;line-height:14.00px;color:#1414d8;letter-spacing:-0.826px;">83.724</div>
<div class="t " style="left:148.95px;top:102.00px;font-size:12px;line-height:14.00px;color:#1414d8;letter-spacing:-0.826px;">83.728</div>
<svg style="left:4px;top:104px" width="12" height="11"><path d="M3.200 9.800h5V6h2.600L5.700 .700 .600 6h2.600z" fill="url(#gu)" stroke="#0e7a22" stroke-width=".8" stroke-linejoin="round"/></svg>
<div class="b " style="left:0px;top:120px;width:186px;height:20px;background:#3399ff;"></div>
<div class="b " style="left:78px;top:120px;width:1px;height:20px;background:#8cc0f8;"></div>
<div class="b " style="left:131px;top:120px;width:1px;height:20px;background:#8cc0f8;"></div>
<div class="t " style="left:20.60px;top:122.00px;font-size:12px;line-height:14.00px;color:#ffffff;letter-spacing:-0.416px;">AUDNZD</div>
<div class="t " style="left:89.90px;top:122.00px;font-size:12px;line-height:14.00px;color:#ffffff;letter-spacing:-0.811px;">1.07514</div>
<div class="t " style="left:143.00px;top:122.00px;font-size:12px;line-height:14.00px;color:#ffffff;letter-spacing:-0.811px;">1.07526</div>
<svg style="left:4px;top:124px" width="12" height="11"><path d="M3.200 9.800h5V6h2.600L5.700 .700 .600 6h2.600z" fill="url(#gu)" stroke="#0e7a22" stroke-width=".8" stroke-linejoin="round"/></svg>
<div class="b " style="left:0px;top:140px;width:186px;height:20px;background:#f2fcf3;"></div>
<div class="b " style="left:0px;top:159px;width:186px;height:1px;background:#d4dce0;"></div>
<div class="b " style="left:78px;top:140px;width:1px;height:20px;background:#c8d0d4;"></div>
<div class="b " style="left:131px;top:140px;width:1px;height:20px;background:#c8d0d4;"></div>
<div class="t " style="left:20.60px;top:142.00px;font-size:12px;line-height:14.00px;color:#111;letter-spacing:-0.807px;">AUDSGD</div>
<div class="t " style="left:89.90px;top:142.00px;font-size:12px;line-height:14.00px;color:#1414d8;letter-spacing:-0.811px;">1.03292</div>
<div class="t " style="left:143.00px;top:142.00px;font-size:12px;line-height:14.00px;color:#1414d8;letter-spacing:-0.811px;">1.03315</div>
<svg style="left:4px;top:144px" width="12" height="11"><path d="M3.200 9.800h5V6h2.600L5.700 .700 .600 6h2.600z" fill="url(#gu)" stroke="#0e7a22" stroke-width=".8" stroke-linejoin="round"/></svg>
<div class="b " style="left:0px;top:160px;width:186px;height:20px;background:#f2fcf3;"></div>
<div class="b " style="left:0px;top:179px;width:186px;height:1px;background:#d4dce0;"></div>
<div class="b " style="left:78px;top:160px;width:1px;height:20px;background:#c8d0d4;"></div>
<div class="b " style="left:131px;top:160px;width:1px;height:20px;background:#c8d0d4;"></div>
<div class="t " style="left:20.60px;top:162.00px;font-size:12px;line-height:14.00px;color:#111;letter-spacing:-0.583px;">CADCHF</div>
<div class="t " style="left:89.90px;top:162.00px;font-size:12px;line-height:14.00px;color:#d82020;letter-spacing:-0.811px;">0.74054</div>
<div class="t " style="left:143.00px;top:162.00px;font-size:12px;line-height:14.00px;color:#d82020;letter-spacing:-0.811px;">0.74064</div>
<svg style="left:4px;top:164px" width="12" height="11"><path d="M3.200 .700h5v3.800h2.600L5.700 9.800 .600 4.500h2.600z" fill="url(#gd)" stroke="#a83c0c" stroke-width=".8" stroke-linejoin="round"/></svg>
<div class="b " style="left:0px;top:180px;width:186px;height:20px;background:#f2fcf3;"></div>
<div class="b " style="left:0px;top:199px;width:186px;height:1px;background:#d4dce0;"></div>
<div class="b " style="left:78px;top:180px;width:1px;height:20px;background:#c8d0d4;"></div>
<div class="b " style="left:131px;top:180px;width:1px;height:20px;background:#c8d0d4;"></div>
<div class="t " style="left:20.60px;top:182.00px;font-size:12px;line-height:14.00px;color:#111;letter-spacing:-0.974px;">CADJPY</div>
<div class="t " style="left:95.85px;top:182.00px;font-size:12px;line-height:14.00px;color:#d82020;letter-spacing:-0.826px;">83.093</div>
<div class="t " style="left:148.95px;top:182.00px;font-size:12px;line-height:14.00px;color:#d82020;letter-spacing:-0.826px;">83.098</div>
<svg style="left:4px;top:184px" width="12" height="11"><path d="M3.200 .700h5v3.800h2.600L5.700 9.800 .600 4.500h2.600z" fill="url(#gd)" stroke="#a83c0c" stroke-width=".8" stroke-linejoin="round"/></svg>
<div class="b " style="left:0px;top:200px;width:186px;height:20px;background:#f2fcf3;"></div>
<div class="b " style="left:0px;top:219px;width:186px;height:1px;background:#d4dce0;"></div>
<div class="b " style="left:78px;top:200px;width:1px;height:20px;background:#c8d0d4;"></div>
<div class="b " style="left:131px;top:200px;width:1px;height:20px;background:#c8d0d4;"></div>
<div class="t " style="left:20.60px;top:202.00px;font-size:12px;line-height:14.00px;color:#111;letter-spacing:-1.195px;">CHFJPY</div>
<div class="t " style="left:89.90px;top:202.00px;font-size:12px;line-height:14.00px;color:#1414d8;letter-spacing:-0.684px;">112.198</div>
<div class="t " style="left:143.00px;top:202.00px;font-size:12px;line-height:14.00px;color:#1414d8;letter-spacing:-0.684px;">112.206</div>
<svg style="left:4px;top:204px" width="12" height="11"><path d="M3.200 9.800h5V6h2.600L5.700 .700 .600 6h2.600z" fill="url(#gu)" stroke="#0e7a22" stroke-width=".8" stroke-linejoin="round"/></svg>
<div class="b " style="left:0px;top:220px;width:186px;height:20px;background:#f2fcf3;"></div>
<div class="b " style="left:0px;top:239px;width:186px;height:1px;background:#d4dce0;"></div>
<div class="b " style="left:78px;top:220px;width:1px;height:20px;background:#c8d0d4;"></div>
<div class="b " style="left:131px;top:220px;width:1px;height:20px;background:#c8d0d4;"></div>
<div class="t " style="left:20.60px;top:222.00px;font-size:12px;line-height:14.00px;color:#111;letter-spacing:-1.028px;">CHFSGD</div>
<div class="t " style="left:89.90px;top:222.00px;font-size:12px;line-height:14.00px;color:#1414d8;letter-spacing:-0.811px;">1.38426</div>
<div class="t " style="left:143.00px;top:222.00px;font-size:12px;line-height:14.00px;color:#1414d8;letter-spacing:-0.811px;">1.38448</div>
<svg style="left:4px;top:224px" width="12" height="11"><path d="M3.200 9.800h5V6h2.600L5.700 .700 .600 6h2.600z" fill="url(#gu)" stroke="#0e7a22" stroke-width=".8" stroke-linejoin="round"/></svg>
</div>
<div class="b " style="left:188px;top:93px;width:16px;height:254px;background:#f0f0f0;"></div>
<svg style="left:192px;top:100px" width="8" height="5"><path d="M0 4.5l4-4 4 4z" fill="#555"/></svg>
<svg style="left:192px;top:336px" width="8" height="5"><path d="M0 .5l4 4 4-4z" fill="#555"/></svg>
<div class="b" style="left:189px;top:138px;width:14px;height:28px;border:1px solid #a4a4a4;border-radius:2px;background:linear-gradient(90deg,#f8f8f8,#ececec 45%,#cfcfcf);"></div>
<div class="b " style="left:192px;top:148px;width:7px;height:1px;background:#484848;"></div>
<div class="b " style="left:192px;top:149px;width:7px;height:1px;background:#fafafa;"></div>
<div class="b " style="left:192px;top:151px;width:7px;height:1px;background:#484848;"></div>
<div class="b " style="left:192px;top:152px;width:7px;height:1px;background:#fafafa;"></div>
<div class="b " style="left:192px;top:154px;width:7px;height:1px;background:#484848;"></div>
<div class="b " style="left:192px;top:155px;width:7px;height:1px;background:#fafafa;"></div>
<div class="b " style="left:0px;top:347px;width:204px;height:1px;background:#000;"></div>
<div class="b " style="left:0px;top:348px;width:204px;height:22px;background:#f0f0f0;"></div>
<div class="b" style="left:3px;top:347px;width:65px;height:20px;background:#fff;border:1px solid #000;border-top:none;box-shadow:1px 1px 0 #000;"></div>
<div class="t " style="left:12.30px;top:350.00px;font-size:12px;line-height:14.00px;color:#111;letter-spacing:-0.145px;">Symbols</div>
<div class="t " style="left:78.50px;top:350.00px;font-size:12px;line-height:14.00px;color:#6e6e6e;letter-spacing:-0.123px;">Tick Chart</div>
<div class="b " style="left:142px;top:351px;width:1px;height:13px;background:#707070;"></div>
<div class="b " style="left:0px;top:370px;width:209px;height:2px;background:#fafafa;"></div>
<div class="b " style="left:0px;top:372px;width:210px;height:1px;background:#9a9a9a;"></div>
<svg style="left:0;top:0" width="1341" height="461" shape-rendering="crispEdges"><rect x="210" y="77" width="1131" height="274" fill="#000"/><line x1="245.5" y1="79" x2="245.5" y2="245" stroke="#9ca2ac" stroke-width="1" stroke-dasharray="3 3" /><line x1="245.5" y1="248" x2="245.5" y2="330" stroke="#9ca2ac" stroke-width="1" stroke-dasharray="3 3" /><line x1="277.5" y1="79" x2="277.5" y2="245" stroke="#9ca2ac" stroke-width="1" stroke-dasharray="3 3" /><line x1="277.5" y1="248" x2="277.5" y2="330" stroke="#9ca2ac" stroke-width="1" stroke-dasharray="3 3" /><line x1="309.5" y1="79" x2="309.5" y2="245" stroke="#9ca2ac" stroke-width="1" stroke-dasharray="3 3" /><line x1="309.5" y1="248" x2="309.5" y2="330" stroke="#9ca2ac" stroke-width="1" stroke-dasharray="3 3" /><line x1="341.5" y1="79" x2="341.5" y2="245" stroke="#9ca2ac" stroke-width="1" stroke-dasharray="3 3" /><line x1="341.5" y1="248" x2="341.5" y2="330" stroke="#9ca2ac" stroke-width="1" stroke-dasharray="3 3" /><line x1="373.5" y1="79" x2="373.5" y2="245" stroke="#9ca2ac" stroke-width="1" stroke-dasharray="3 3" /><line x1="373.5" y1="248" x2="373.5" y2="330" stroke="#9ca2ac" stroke-width="1" stroke-dasharray="3 3" /><line x1="405.5" y1="79" x2="405.5" y2="245" stroke="#9ca2ac" stroke-width="1" stroke-dasharray="3 3" /><line x1="405.5" y1="248" x2="405.5" y2="330" stroke="#9ca2ac" stroke-width="1" stroke-dasharray="3 3" /><line x1="437.5" y1="79" x2="437.5" y2="245" stroke="#9ca2ac" stroke-width="1" stroke-dasharray="3 3" /><line x1="437.5" y1="248" x2="437.5" y2="330" stroke="#9ca2ac" stroke-width="1" stroke-dasharray="3 3" /><line x1="469.5" y1="79" x2="469.5" y2="245" stroke="#9ca2ac" stroke-width="1" stroke-dasharray="3 3" /><line x1="469.5" y1="248" x2="469.5" y2="330" stroke="#9ca2ac" stroke-width="1" stroke-dasharray="3 3" /><line x1="501.5" y1="79" x2="501.5" y2="245" stroke="#9ca2ac" stroke-width="1" stroke-dasharray="3 3" /><line x1="501.5" y1="248" x2="501.5" y2="330" stroke="#9ca2ac" stroke-width="1" stroke-dasharray="3 3" /><line x1="533.5" y1="79" x2="533.5" y2="245" stroke="#9ca2ac" stroke-width="1" stroke-dasharray="3 3" /><line x1="533.5" y1="248" x2="533.5" y2="330" stroke="#9ca2ac" stroke-width="1" stroke-dasharray="3 3" /><line x1="565.5" y1="79" x2="565.5" y2="245" stroke="#9ca2ac" stroke-width="1" stroke-dasharray="3 3" /><line x1="565.5" y1="248" x2="565.5" y2="330" stroke="#9ca2ac" stroke-width="1" stroke-dasharray="3 3" /><line x1="597.5" y1="79" x2="597.5" y2="245" stroke="#9ca2ac" stroke-width="1" stroke-dasharray="3 3" /><line x1="597.5" y1="248" x2="597.5" y2="330" stroke="#9ca2ac" stroke-width="1" stroke-dasharray="3 3" /><line x1="629.5" y1="79" x2="629.5" y2="245" stroke="#9ca2ac" stroke-width="1" stroke-dasharray="3 3" /><line x1="629.5" y1="248" x2="629.5" y2="330" stroke="#9ca2ac" stroke-width="1" stroke-dasharray="3 3" /><line x1="661.5" y1="79" x2="661.5" y2="245" stroke="#9ca2ac" stroke-width="1" stroke-dasharray="3 3" /><line x1="661.5" y1="248" x2="661.5" y2="330" stroke="#9ca2ac" stroke-width="1" stroke-dasharray="3 3" /><line x1="693.5" y1="79" x2="693.5" y2="245" stroke="#9ca2ac" stroke-width="1" stroke-dasharray="3 3" /><line x1="693.5" y1="248" x2="693.5" y2="330" stroke="#9ca2ac" stroke-width="1" stroke-dasharray="3 3" /><line x1="725.5" y1="79" x2="725.5" y2="245" stroke="#9ca2ac" stroke-width="1" stroke-dasharray="3 3" /><line x1="725.5" y1="248" x2="725.5" y2="330" stroke="#9ca2ac" stroke-width="1" stroke-dasharray="3 3" /><line x1="757.5" y1="79" x2="757.5" y2="245" stroke="#9ca2ac" stroke-width="1" stroke-dasharray="3 3" /><line x1="757.5" y1="248" x2="757.5" y2="330" stroke="#9ca2ac" stroke-width="1" stroke-dasharray="3 3" /><line x1="789.5" y1="79" x2="789.5" y2="245" stroke="#9ca2ac" stroke-width="1" stroke-dasharray="3 3" /><line x1="789.5" y1="248" x2="789.5" y2="330" stroke="#9ca2ac" stroke-width="1" stroke-dasharray="3 3" /><line x1="821.5" y1="79" x2="821.5" y2="245" stroke="#9ca2ac" stroke-width="1" stroke-dasharray="3 3" /><line x1="821.5" y1="248" x2="821.5" y2="330" stroke="#9ca2ac" stroke-width="1" stroke-dasharray="3 3" /><line x1="853.5" y1="79" x2="853.5" y2="245" stroke="#9ca2ac" stroke-width="1" stroke-dasharray="3 3" /><line x1="853.5" y1="248" x2="853.5" y2="330" stroke="#9ca2ac" stroke-width="1" stroke-dasharray="3 3" /><line x1="885.5" y1="79" x2="885.5" y2="245" stroke="#9ca2ac" stroke-width="1" stroke-dasharray="3 3" /><line x1="885.5" y1="248" x2="885.5" y2="330" stroke="#9ca2ac" stroke-width="1" stroke-dasharray="3 3" /><line x1="917.5" y1="79" x2="917.5" y2="245" stroke="#9ca2ac" stroke-width="1" stroke-dasharray="3 3" /><line x1="917.5" y1="248" x2="917.5" y2="330" stroke="#9ca2ac" stroke-width="1" stroke-dasharray="3 3" /><line x1="949.5" y1="79" x2="949.5" y2="245" stroke="#9ca2ac" stroke-width="1" stroke-dasharray="3 3" /><line x1="949.5" y1="248" x2="949.5" y2="330" stroke="#9ca2ac" stroke-width="1" stroke-dasharray="3 3" /><line x1="981.5" y1="79" x2="981.5" y2="245" stroke="#9ca2ac" stroke-width="1" stroke-dasharray="3 3" /><line x1="981.5" y1="248" x2="981.5" y2="330" stroke="#9ca2ac" stroke-width="1" stroke-dasharray="3 3" /><line x1="1013.5" y1="79" x2="1013.5" y2="245" stroke="#9ca2ac" stroke-width="1" stroke-dasharray="3 3" /><line x1="1013.5" y1="248" x2="1013.5" y2="330" stroke="#9ca2ac" stroke-width="1" stroke-dasharray="3 3" /><line x1="1045.5" y1="79" x2="1045.5" y2="245" stroke="#9ca2ac" stroke-width="1" stroke-dasharray="3 3" /><line x1="1045.5" y1="248" x2="1045.5" y2="330" stroke="#9ca2ac" stroke-width="1" stroke-dasharray="3 3" /><line x1="1077.5" y1="79" x2="1077.5" y2="245" stroke="#9ca2ac" stroke-width="1" stroke-dasharray="3 3" /><line x1="1077.5" y1="248" x2="1077.5" y2="330" stroke="#9ca2ac" stroke-width="1" stroke-dasharray="3 3" /><line x1="1109.5" y1="79" x2="1109.5" y2="245" stroke="#9ca2ac" stroke-width="1" stroke-dasharray="3 3" /><line x1="1109.5" y1="248" x2="1109.5" y2="330" stroke="#9ca2ac" stroke-width="1" stroke-dasharray="3 3" /><line x1="1141.5" y1="79" x2="1141.5" y2="245" stroke="#9ca2ac" stroke-width="1" stroke-dasharray="3 3" /><line x1="1141.5" y1="248" x2="1141.5" y2="330" stroke="#9ca2ac" stroke-width="1" stroke-dasharray="3 3" /><line x1="1173.5" y1="79" x2="1173.5" y2="245" stroke="#9ca2ac" stroke-width="1" stroke-dasharray="3 3" /><line x1="1173.5" y1="248" x2="1173.5" y2="330" stroke="#9ca2ac" stroke-width="1" stroke-dasharray="3 3" /><line x1="1205.5" y1="79" x2="1205.5" y2="245" stroke="#9ca2ac" stroke-width="1" stroke-dasharray="3 3" /><line x1="1205.5" y1="248" x2="1205.5" y2="330" stroke="#9ca2ac" stroke-width="1" stroke-dasharray="3 3" /><line x1="1237.5" y1="79" x2="1237.5" y2="245" stroke="#9ca2ac" stroke-width="1" stroke-dasharray="3 3" /><line x1="1237.5" y1="248" x2="1237.5" y2="330" stroke="#9ca2ac" stroke-width="1" stroke-dasharray="3 3" /><line x1="1269.5" y1="79" x2="1269.5" y2="245" stroke="#9ca2ac" stroke-width="1" stroke-dasharray="3 3" /><line x1="1269.5" y1="248" x2="1269.5" y2="330" stroke="#9ca2ac" stroke-width="1" stroke-dasharray="3 3" /><line x1="1301.5" y1="79" x2="1301.5" y2="245" stroke="#9ca2ac" stroke-width="1" stroke-dasharray="3 3" /><line x1="1301.5" y1="248" x2="1301.5" y2="330" stroke="#9ca2ac" stroke-width="1" stroke-dasharray="3 3" /><line x1="214" y1="111.5" x2="1312" y2="111.5" stroke="#9ca2ac" stroke-width="1" stroke-dasharray="3 3" /><line x1="214" y1="144.5" x2="1312" y2="144.5" stroke="#9ca2ac" stroke-width="1" stroke-dasharray="3 3" /><line x1="214" y1="177.5" x2="1312" y2="177.5" stroke="#9ca2ac" stroke-width="1" stroke-dasharray="3 3" /><line x1="214" y1="210.5" x2="1312" y2="210.5" stroke="#9ca2ac" stroke-width="1" stroke-dasharray="3 3" /><line x1="214" y1="243.5" x2="1312" y2="243.5" stroke="#9ca2ac" stroke-width="1" stroke-dasharray="3 3" /><line x1="214" y1="265.5" x2="1312" y2="265.5" stroke="#9ca2ac" stroke-width="1" stroke-dasharray="3 3" /><line x1="214" y1="313.5" x2="1312" y2="313.5" stroke="#9ca2ac" stroke-width="1" stroke-dasharray="3 3" /><line x1="213" y1="82.5" x2="1312" y2="82.5" stroke="#c41c1c" stroke-width="1" stroke-dasharray="9 6 3 6" /><line x1="213" y1="105.5" x2="1312" y2="105.5" stroke="#4cb44c" stroke-width="1" stroke-dasharray="9 6 3 6" /><line x1="213" y1="154.5" x2="1313" y2="154.5" stroke="#98a0ac" stroke-width="1" /><line x1="213.5" y1="153" x2="213.5" y2="165" stroke="#3fe03f" stroke-width="1" /><rect x="213" y="157" width="13" height="2" fill="#3fe03f"/><line x1="245.5" y1="150" x2="245.5" y2="165" stroke="#3fe03f" stroke-width="1" /><rect x="233.5" y="150.5" width="24" height="8" fill="#000" stroke="#3fe03f" stroke-width="1"/><line x1="277.5" y1="142" x2="277.5" y2="156" stroke="#3fe03f" stroke-width="1" /><rect x="265.5" y="147.5" width="24" height="4" fill="#000" stroke="#3fe03f" stroke-width="1"/><line x1="309.5" y1="133" x2="309.5" y2="154" stroke="#3fe03f" stroke-width="1" /><rect x="297.5" y="133.5" width="24" height="14" fill="#000" stroke="#3fe03f" stroke-width="1"/><line x1="341.5" y1="133" x2="341.5" y2="158" stroke="#3fe03f" stroke-width="1" /><rect x="329.5" y="133.5" width="24" height="8" fill="#fff" stroke="#3fe03f" stroke-width="1"/><line x1="373.5" y1="141" x2="373.5" y2="196" stroke="#3fe03f" stroke-width="1" /><rect x="361.5" y="141.5" width="24" height="26" fill="#fff" stroke="#3fe03f" stroke-width="1"/><line x1="405.5" y1="140" x2="405.5" y2="184" stroke="#3fe03f" stroke-width="1" /><rect x="393.5" y="167.5" width="24" height="10" fill="#fff" stroke="#3fe03f" stroke-width="1"/><line x1="437.5" y1="165" x2="437.5" y2="201" stroke="#3fe03f" stroke-width="1" /><rect x="425.5" y="177.5" width="24" height="17" fill="#fff" stroke="#3fe03f" stroke-width="1"/><line x1="469.5" y1="170" x2="469.5" y2="203" stroke="#3fe03f" stroke-width="1" /><rect x="457.5" y="184.5" width="24" height="10" fill="#000" stroke="#3fe03f" stroke-width="1"/><line x1="501.5" y1="176" x2="501.5" y2="198" stroke="#3fe03f" stroke-width="1" /><rect x="489.5" y="184.5" width="24" height="7" fill="#fff" stroke="#3fe03f" stroke-width="1"/><line x1="533.5" y1="151" x2="533.5" y2="243" stroke="#3fe03f" stroke-width="1" /><rect x="521.5" y="192.5" width="24" height="4" fill="#fff" stroke="#3fe03f" stroke-width="1"/><line x1="565.5" y1="151" x2="565.5" y2="202" stroke="#3fe03f" stroke-width="1" /><rect x="553.5" y="153.5" width="24" height="42" fill="#000" stroke="#3fe03f" stroke-width="1"/><line x1="597.5" y1="104" x2="597.5" y2="172" stroke="#3fe03f" stroke-width="1" /><rect x="585.5" y="139.5" width="24" height="14" fill="#000" stroke="#3fe03f" stroke-width="1"/><line x1="629.5" y1="113" x2="629.5" y2="146" stroke="#3fe03f" stroke-width="1" /><rect x="617.5" y="125.5" width="24" height="14" fill="#000" stroke="#3fe03f" stroke-width="1"/><line x1="661.5" y1="121" x2="661.5" y2="146" stroke="#3fe03f" stroke-width="1" /><rect x="649.5" y="126.5" width="24" height="16" fill="#fff" stroke="#3fe03f" stroke-width="1"/><line x1="693.5" y1="134" x2="693.5" y2="160" stroke="#3fe03f" stroke-width="1" /><rect x="681.5" y="142.5" width="24" height="11" fill="#fff" stroke="#3fe03f" stroke-width="1"/><line x1="725.5" y1="139" x2="725.5" y2="160" stroke="#3fe03f" stroke-width="1" /><rect x="713.5" y="149.5" width="24" height="4" fill="#000" stroke="#3fe03f" stroke-width="1"/><line x1="757.5" y1="142" x2="757.5" y2="177" stroke="#3fe03f" stroke-width="1" /><rect x="745.5" y="149.5" width="24" height="17" fill="#fff" stroke="#3fe03f" stroke-width="1"/><line x1="789.5" y1="159" x2="789.5" y2="175" stroke="#3fe03f" stroke-width="1" /><rect x="777.5" y="166.5" width="24" height="3" fill="#fff" stroke="#3fe03f" stroke-width="1"/><line x1="821.5" y1="152" x2="821.5" y2="168" stroke="#3fe03f" stroke-width="1" /><rect x="809" y="158" width="25" height="2" fill="#3fe03f"/><line x1="853.5" y1="152" x2="853.5" y2="161" stroke="#3fe03f" stroke-width="1" /><rect x="841" y="157" width="25" height="2" fill="#3fe03f"/><line x1="885.5" y1="151" x2="885.5" y2="168" stroke="#3fe03f" stroke-width="1" /><rect x="873.5" y="157.5" width="24" height="5" fill="#fff" stroke="#3fe03f" stroke-width="1"/><line x1="917.5" y1="151" x2="917.5" y2="166" stroke="#3fe03f" stroke-width="1" /><rect x="905.5" y="157.5" width="24" height="5" fill="#000" stroke="#3fe03f" stroke-width="1"/><line x1="949.5" y1="140" x2="949.5" y2="168" stroke="#3fe03f" stroke-width="1" /><rect x="937.5" y="144.5" width="24" height="11" fill="#000" stroke="#3fe03f" stroke-width="1"/><line x1="981.5" y1="129" x2="981.5" y2="147" stroke="#3fe03f" stroke-width="1" /><rect x="969.5" y="133.5" width="24" height="11" fill="#000" stroke="#3fe03f" stroke-width="1"/><line x1="1013.5" y1="127" x2="1013.5" y2="142" stroke="#3fe03f" stroke-width="1" /><rect x="1001.5" y="130.5" width="24" height="3" fill="#000" stroke="#3fe03f" stroke-width="1"/><line x1="1045.5" y1="122" x2="1045.5" y2="137" stroke="#3fe03f" stroke-width="1" /><rect x="1033.5" y="126.5" width="24" height="4" fill="#000" stroke="#3fe03f" stroke-width="1"/><line x1="1077.5" y1="121" x2="1077.5" y2="142" stroke="#3fe03f" stroke-width="1" /><rect x="1065.5" y="125.5" width="24" height="12" fill="#fff" stroke="#3fe03f" stroke-width="1"/><line x1="1109.5" y1="127" x2="1109.5" y2="149" stroke="#3fe03f" stroke-width="1" /><rect x="1097.5" y="129.5" width="24" height="8" fill="#000" stroke="#3fe03f" stroke-width="1"/><line x1="1141.5" y1="90" x2="1141.5" y2="147" stroke="#3fe03f" stroke-width="1" /><rect x="1129.5" y="97.5" width="24" height="33" fill="#000" stroke="#3fe03f" stroke-width="1"/><line x1="1173.5" y1="92" x2="1173.5" y2="153" stroke="#3fe03f" stroke-width="1" /><rect x="1161.5" y="97.5" width="24" height="8" fill="#fff" stroke="#3fe03f" stroke-width="1"/><line x1="1205.5" y1="105" x2="1205.5" y2="155" stroke="#3fe03f" stroke-width="1" /><rect x="1193.5" y="105.5" width="24" height="48" fill="#fff" stroke="#3fe03f" stroke-width="1"/><line x1="1237.5" y1="145" x2="1237.5" y2="155" stroke="#3fe03f" stroke-width="1" /><rect x="1225" y="154" width="25" height="1" fill="#38b838"/></svg>
<svg style="left:0;top:0" width="1341" height="461"><polyline points="213.5,288.75 245.5,268 277.5,262.5 309.5,258 341.5,258 373.5,273.75 405.5,295 437.5,310.5 469.5,314.25 501.5,317.5 533.5,305.5 565.5,285 597.5,271.25 629.5,262.5 661.5,268.75 693.5,272.5 725.5,285 757.5,301.25 789.5,315 821.5,313.75 853.5,306.5 885.5,296.25 917.5,289.5 949.5,279.5 981.5,262 1013.5,256.25 1045.5,254.5 1077.5,260.5 1109.5,265 1141.5,267.5 1173.5,266.3 1205.5,288.6 1237.5,309" fill="none" stroke="#48b8ac" stroke-width="1" shape-rendering="crispEdges"/><polyline points="213.5,294.5 245.5,283.75 277.5,273 309.5,263 341.5,258.75 373.5,263 405.5,275 437.5,293 469.5,306.25 501.5,313.25 533.5,312.5 565.5,302.5 597.5,287.5 629.5,272.5 661.5,267.5 693.5,268.75 725.5,275 757.5,286.25 789.5,300.75 821.5,310.75 853.5,312.7 885.5,305 917.5,297 949.5,288.75 981.5,277.5 1013.5,266.25 1045.5,258.75 1077.5,257 1109.5,260.5 1141.5,264.25 1173.5,266.3 1205.5,273 1237.5,289" fill="none" stroke="#e02020" stroke-width="1" shape-rendering="crispEdges"/><line x1="212.5" y1="79" x2="212.5" y2="330" stroke="#ffffff" stroke-width="1" /><line x1="1312.5" y1="79" x2="1312.5" y2="330" stroke="#ffffff" stroke-width="1" /><line x1="212" y1="79.5" x2="1313" y2="79.5" stroke="#ffffff" stroke-width="1" /><line x1="212" y1="245.5" x2="1313" y2="245.5" stroke="#ffffff" stroke-width="1" /><line x1="212" y1="248.5" x2="1313" y2="248.5" stroke="#ffffff" stroke-width="1" /><line x1="212" y1="329.5" x2="1313" y2="329.5" stroke="#ffffff" stroke-width="1" /><line x1="1313" y1="111.5" x2="1316" y2="111.5" stroke="#ffffff" stroke-width="1" /><line x1="1313" y1="144.5" x2="1316" y2="144.5" stroke="#ffffff" stroke-width="1" /><line x1="1313" y1="177.5" x2="1316" y2="177.5" stroke="#ffffff" stroke-width="1" /><line x1="1313" y1="210.5" x2="1316" y2="210.5" stroke="#ffffff" stroke-width="1" /><line x1="1313" y1="243.5" x2="1316" y2="243.5" stroke="#ffffff" stroke-width="1" /><line x1="1313" y1="255.5" x2="1316" y2="255.5" stroke="#ffffff" stroke-width="1" /><line x1="1313" y1="265.5" x2="1316" y2="265.5" stroke="#ffffff" stroke-width="1" /><line x1="1313" y1="313.5" x2="1316" y2="313.5" stroke="#ffffff" stroke-width="1" /><line x1="1313" y1="323.5" x2="1316" y2="323.5" stroke="#ffffff" stroke-width="1" /><line x1="213.5" y1="330" x2="213.5" y2="333" stroke="#ffffff" stroke-width="1" /><line x1="277.5" y1="330" x2="277.5" y2="333" stroke="#ffffff" stroke-width="1" /><line x1="341.5" y1="330" x2="341.5" y2="333" stroke="#ffffff" stroke-width="1" /><line x1="405.5" y1="330" x2="405.5" y2="333" stroke="#ffffff" stroke-width="1" /><line x1="469.5" y1="330" x2="469.5" y2="333" stroke="#ffffff" stroke-width="1" /><line x1="533.5" y1="330" x2="533.5" y2="333" stroke="#ffffff" stroke-width="1" /><line x1="597.5" y1="330" x2="597.5" y2="333" stroke="#ffffff" stroke-width="1" /><line x1="661.5" y1="330" x2="661.5" y2="333" stroke="#ffffff" stroke-width="1" /><line x1="725.5" y1="330" x2="725.5" y2="333" stroke="#ffffff" stroke-width="1" /><line x1="789.5" y1="330" x2="789.5" y2="333" stroke="#ffffff" stroke-width="1" /><line x1="853.5" y1="330" x2="853.5" y2="333" stroke="#ffffff" stroke-width="1" /><line x1="917.5" y1="330" x2="917.5" y2="333" stroke="#ffffff" stroke-width="1" /><line x1="981.5" y1="330" x2="981.5" y2="333" stroke="#ffffff" stroke-width="1" /><line x1="1045.5" y1="330" x2="1045.5" y2="333" stroke="#ffffff" stroke-width="1" /><line x1="1109.5" y1="330" x2="1109.5" y2="333" stroke="#ffffff" stroke-width="1" /><line x1="1173.5" y1="330" x2="1173.5" y2="333" stroke="#ffffff" stroke-width="1" /><line x1="1237.5" y1="330" x2="1237.5" y2="333" stroke="#ffffff" stroke-width="1" /><path d="M370 121.5 374 121.5 374 133.5 380 127.5 380 133 372 140.5 364 133 364 127.5 370 133.5z" fill="#f4f020"/><path d="M658 103.5 662 103.5 662 115.5 668 109.5 668 115 660 122.5 652 115 652 109.5 658 115.5z" fill="#f4f020"/><path d="M1074 113.5 1078 113.5 1078 125.5 1084 119.5 1084 125 1076 132.5 1068 125 1068 119.5 1074 125.5z" fill="#f4f020"/><path d="M1202 93 1206 93 1206 105 1212 99 1212 104.5 1204 112 1196 104.5 1196 99 1202 105z" fill="#f4f020"/><clipPath id="cpm"><rect x="213" y="80" width="1099" height="165"/></clipPath><g clip-path="url(#cpm)"><path d="M530 253 534 253 534 241 540 247 540 241.5 532 234 524 241.5 524 247 530 241z" fill="#1010f0"/></g><path d="M850 177.5 854 177.5 854 165.5 860 171.5 860 166 852 158.5 844 166 844 171.5 850 165.5z" fill="#1010f0"/><path d="M1170 144 1174 144 1174 132 1180 138 1180 132.5 1172 125 1164 132.5 1164 138 1170 132z" fill="#1010f0"/><rect x="1314" y="150" width="27" height="10" fill="#fff"/><path d="M216 86h7.400l-3.700 4.200z" fill="#fff"/></svg>
<div class="t ct" style="left:228.20px;top:82.00px;font-size:10px;line-height:11.00px;color:#ffffff;will-change:transform;transform:scale(0.9414,0.8750);transform-origin:0 9px;">EURUSD,H1  1.23119 1.23155 1.23114 1.23119</div>
<div class="t ct" style="left:219.30px;top:94.00px;font-size:10px;line-height:11.00px;color:#ffffff;will-change:transform;transform:scale(0.9485,0.8750);transform-origin:0 9px;">#92502769 buy 0.01</div>
<div class="t ct" style="left:217.00px;top:252.00px;font-size:10px;line-height:11.00px;color:#ffffff;will-change:transform;transform:scale(0.9321,0.8750);transform-origin:0 9px;">Sto(5,3,3) 23.9669 52.1320</div>
<div class="t ct" style="left:212.00px;top:334.00px;font-size:10px;line-height:11.00px;color:#ffffff;will-change:transform;transform:scale(0.9192,0.8750);transform-origin:0 9px;">9 Mar 2018</div>
<div class="t ct" style="left:276.00px;top:334.00px;font-size:10px;line-height:11.00px;color:#ffffff;will-change:transform;transform:scale(0.9276,0.8750);transform-origin:0 9px;">9 Mar 07:00</div>
<div class="t ct" style="left:340.00px;top:334.00px;font-size:10px;line-height:11.00px;color:#ffffff;will-change:transform;transform:scale(0.9276,0.8750);transform-origin:0 9px;">9 Mar 09:00</div>
<div class="t ct" style="left:404.00px;top:334.00px;font-size:10px;line-height:11.00px;color:#ffffff;will-change:transform;transform:scale(0.9407,0.8750);transform-origin:0 9px;">9 Mar 11:00</div>
<div class="t ct" style="left:468.00px;top:334.00px;font-size:10px;line-height:11.00px;color:#ffffff;will-change:transform;transform:scale(0.9276,0.8750);transform-origin:0 9px;">9 Mar 13:00</div>
<div class="t ct" style="left:532.00px;top:334.00px;font-size:10px;line-height:11.00px;color:#ffffff;will-change:transform;transform:scale(0.9276,0.8750);transform-origin:0 9px;">9 Mar 15:00</div>
<div class="t ct" style="left:596.00px;top:334.00px;font-size:10px;line-height:11.00px;color:#ffffff;will-change:transform;transform:scale(0.9276,0.8750);transform-origin:0 9px;">9 Mar 17:00</div>
<div class="t ct" style="left:660.00px;top:334.00px;font-size:10px;line-height:11.00px;color:#ffffff;will-change:transform;transform:scale(0.9276,0.8750);transform-origin:0 9px;">9 Mar 19:00</div>
<div class="t ct" style="left:724.00px;top:334.00px;font-size:10px;line-height:11.00px;color:#ffffff;will-change:transform;transform:scale(0.9276,0.8750);transform-origin:0 9px;">9 Mar 21:00</div>
<div class="t ct" style="left:788.00px;top:334.00px;font-size:10px;line-height:11.00px;color:#ffffff;will-change:transform;transform:scale(0.9276,0.8750);transform-origin:0 9px;">9 Mar 23:00</div>
<div class="t ct" style="left:852.00px;top:334.00px;font-size:10px;line-height:11.00px;color:#ffffff;will-change:transform;transform:scale(0.9164,0.8750);transform-origin:0 9px;">12 Mar 01:00</div>
<div class="t ct" style="left:916.00px;top:334.00px;font-size:10px;line-height:11.00px;color:#ffffff;will-change:transform;transform:scale(0.9164,0.8750);transform-origin:0 9px;">12 Mar 03:00</div>
<div class="t ct" style="left:980.00px;top:334.00px;font-size:10px;line-height:11.00px;color:#ffffff;will-change:transform;transform:scale(0.9164,0.8750);transform-origin:0 9px;">12 Mar 05:00</div>
<div class="t ct" style="left:1044.00px;top:334.00px;font-size:10px;line-height:11.00px;color:#ffffff;will-change:transform;transform:scale(0.9164,0.8750);transform-origin:0 9px;">12 Mar 07:00</div>
<div class="t ct" style="left:1108.00px;top:334.00px;font-size:10px;line-height:11.00px;color:#ffffff;will-change:transform;transform:scale(0.9164,0.8750);transform-origin:0 9px;">12 Mar 09:00</div>
<div class="t ct" style="left:1172.00px;top:334.00px;font-size:10px;line-height:11.00px;color:#ffffff;will-change:transform;transform:scale(0.9281,0.8750);transform-origin:0 9px;">12 Mar 11:00</div>
<div class="t ct" style="left:1236.00px;top:334.00px;font-size:10px;line-height:11.00px;color:#ffffff;will-change:transform;transform:scale(0.9164,0.8750);transform-origin:0 9px;">12 Mar 13:00</div>
<div class="t ct" style="left:1318.50px;top:106.00px;font-size:10px;line-height:11.00px;color:#ffffff;will-change:transform;transform:scale(0.9910,0.8750);transform-origin:0 9px;">1.233</div>
<div class="t ct" style="left:1318.50px;top:139.00px;font-size:10px;line-height:11.00px;color:#ffffff;will-change:transform;transform:scale(0.9910,0.8750);transform-origin:0 9px;">1.231</div>
<div class="t ct" style="left:1318.50px;top:172.00px;font-size:10px;line-height:11.00px;color:#ffffff;will-change:transform;transform:scale(0.9910,0.8750);transform-origin:0 9px;">1.230</div>
<div class="t ct" style="left:1318.50px;top:205.00px;font-size:10px;line-height:11.00px;color:#ffffff;will-change:transform;transform:scale(0.9910,0.8750);transform-origin:0 9px;">1.228</div>
<div class="t ct" style="left:1318.50px;top:238.00px;font-size:10px;line-height:11.00px;color:#ffffff;will-change:transform;transform:scale(0.9910,0.8750);transform-origin:0 9px;">1.227</div>
<div class="t " style="left:1318.50px;top:149.00px;font-size:10px;line-height:11.00px;color:#000;will-change:transform;transform:scale(0.9910,0.8750);transform-origin:0 9px;">1.231</div>
<div class="t ct" style="left:1318.00px;top:250.00px;font-size:10px;line-height:11.00px;color:#ffffff;will-change:transform;transform:scale(0.9200,0.8750);transform-origin:0 9px;">100</div>
<div class="t ct" style="left:1318.00px;top:260.00px;font-size:10px;line-height:11.00px;color:#ffffff;will-change:transform;transform:scale(0.9200,0.8750);transform-origin:0 9px;">80</div>
<div class="t ct" style="left:1318.00px;top:308.00px;font-size:10px;line-height:11.00px;color:#ffffff;will-change:transform;transform:scale(0.9200,0.8750);transform-origin:0 9px;">20</div>
<div class="t ct" style="left:1318.00px;top:318.00px;font-size:10px;line-height:11.00px;color:#ffffff;">0</div>
<div class="b " style="left:210px;top:351px;width:1131px;height:2px;background:#fff;"></div>
<div class="b " style="left:210px;top:353px;width:1131px;height:1px;background:#000;"></div>
<div class="b" style="left:466px;top:353px;width:84px;height:19px;background:#fff;border:1px solid #000;border-top:none;box-shadow:1px 1px 0 #777;"></div>
<div class="t " style="left:226.00px;top:356.00px;font-size:12px;line-height:14.00px;color:#6e6e6e;letter-spacing:-0.705px;">AUDUSD,H1</div>
<div class="t " style="left:313.00px;top:356.00px;font-size:12px;line-height:14.00px;color:#6e6e6e;letter-spacing:-0.928px;">GBPUSD,H1</div>
<div class="t " style="left:397.40px;top:356.00px;font-size:12px;line-height:14.00px;color:#6e6e6e;letter-spacing:-0.886px;">USDJPY,H1</div>
<div class="t " style="left:477.00px;top:356.00px;font-size:12px;line-height:14.00px;color:#111;letter-spacing:-0.983px;">EURUSD,H1</div>
<div class="t " style="left:561.00px;top:356.00px;font-size:12px;line-height:14.00px;color:#6e6e6e;letter-spacing:-0.831px;">GBPJPY,H1</div>
<div class="t " style="left:642.00px;top:356.00px;font-size:12px;line-height:14.00px;color:#6e6e6e;letter-spacing:-0.608px;">CADJPY,H1</div>
<div class="t " style="left:725.00px;top:356.00px;font-size:12px;line-height:14.00px;color:#6e6e6e;letter-spacing:-0.408px;">AUDNZD,H1</div>
<div class="b " style="left:302px;top:356px;width:1px;height:13px;background:#707070;"></div>
<div class="b " style="left:386px;top:356px;width:1px;height:13px;background:#707070;"></div>
<div class="b " style="left:630px;top:356px;width:1px;height:13px;background:#707070;"></div>
<div class="b " style="left:714px;top:356px;width:1px;height:13px;background:#707070;"></div>
<div class="b " style="left:802px;top:356px;width:1px;height:13px;background:#707070;"></div>
<svg style="left:1324px;top:359px" width="5" height="7"><path d="M4 0v6.500L.5 3.200z" fill="#9a9a9a"/></svg>
<div class="b " style="left:210px;top:354px;width:1px;height:18px;background:#fff;"></div>
<div class="b " style="left:0px;top:373px;width:1341px;height:1px;background:#f0f0f0;"></div>
<svg style="left:-1.4px;top:377.3px" width="10" height="10"><path d="M2.4 2.7L7.6 7.3M7.6 2.7L2.4 7.3" stroke="#000" stroke-width="1.9" fill="none"/></svg>
<div class="b" style="left:0;top:392px;width:10px;height:70px;background:#d4e2f2;"></div>
<div class="b " style="left:12px;top:377px;width:1303px;height:84px;background:#ffffff;border-left:1px solid #a0a0a0;border-top:1px solid #a8a8a8;"></div>
<div class="b" style="left:13px;top:378px;width:1301px;height:24px;background:linear-gradient(#ffffff,#ffffff 40%,#f0f1f3);border-bottom:1px solid #d0d0d0;"></div>
<div class="b " style="left:131px;top:378px;width:1px;height:44px;background:#e0e0e0;"></div>
<div class="b " style="left:297px;top:378px;width:1px;height:44px;background:#e0e0e0;"></div>
<div class="b " style="left:380px;top:378px;width:1px;height:44px;background:#e0e0e0;"></div>
<div class="b " style="left:445px;top:378px;width:1px;height:44px;background:#e0e0e0;"></div>
<div class="b " style="left:527px;top:378px;width:1px;height:44px;background:#e0e0e0;"></div>
<div class="b " style="left:619px;top:378px;width:1px;height:44px;background:#e0e0e0;"></div>
<div class="b " style="left:710px;top:378px;width:1px;height:44px;background:#e0e0e0;"></div>
<div class="b " style="left:804px;top:378px;width:1px;height:44px;background:#e0e0e0;"></div>
<div class="b " style="left:895px;top:378px;width:1px;height:44px;background:#e0e0e0;"></div>
<div class="b " style="left:987px;top:378px;width:1px;height:44px;background:#e0e0e0;"></div>
<div class="b " style="left:1079px;top:378px;width:1px;height:44px;background:#e0e0e0;"></div>
<div class="b " style="left:1170px;top:378px;width:1px;height:44px;background:#e0e0e0;"></div>
<div class="b " style="left:1314px;top:378px;width:1px;height:84px;background:#e8e8e8;"></div>
<div class="t " style="left:19.30px;top:383.00px;font-size:12px;line-height:14.00px;color:#111;letter-spacing:-0.035px;">Order</div>
<svg style="left:59px;top:386px" width="6" height="8"><path d="M1 7L5 1" stroke="#808080" stroke-width="1"/></svg>
<div class="t " style="left:265.00px;top:383.00px;font-size:12px;line-height:14.00px;color:#111;letter-spacing:0.070px;">Time</div>
<div class="t " style="left:348.20px;top:383.00px;font-size:12px;line-height:14.00px;color:#111;letter-spacing:0.121px;">Type</div>
<div class="t " style="left:417.00px;top:383.00px;font-size:12px;line-height:14.00px;color:#111;letter-spacing:-0.336px;">Size</div>
<div class="t " style="left:482.30px;top:383.00px;font-size:12px;line-height:14.00px;color:#111;letter-spacing:-0.086px;">Symbol</div>
<div class="t " style="left:587.50px;top:383.00px;font-size:12px;line-height:14.00px;color:#111;letter-spacing:-0.168px;">Price</div>
<div class="t " style="left:682.00px;top:383.00px;font-size:12px;line-height:14.00px;color:#111;letter-spacing:-0.136px;">S / L</div>
<div class="t " style="left:773.30px;top:383.00px;font-size:12px;line-height:14.00px;color:#111;letter-spacing:-0.124px;">T / P</div>
<div class="t " style="left:863.30px;top:383.00px;font-size:12px;line-height:14.00px;color:#111;letter-spacing:-0.168px;">Price</div>
<div class="t " style="left:915.00px;top:383.00px;font-size:12px;line-height:14.00px;color:#111;letter-spacing:-0.001px;">Commission</div>
<div class="t " style="left:1044.00px;top:383.00px;font-size:12px;line-height:14.00px;color:#111;letter-spacing:-0.370px;">Taxes</div>
<div class="t " style="left:1136.50px;top:383.00px;font-size:12px;line-height:14.00px;color:#111;letter-spacing:-0.254px;">Swap</div>
<div class="t " style="left:1277.50px;top:383.00px;font-size:12px;line-height:14.00px;color:#111;letter-spacing:0.332px;">Profit</div>
<div class="b " style="left:13px;top:421px;width:1301px;height:1px;background:#e8e8e8;"></div>
<svg style="left:16px;top:404px" width="15" height="16"><path d="M1.5 1.5h7l3 3v9h-10z" fill="#fff" stroke="#707070"/><path d="M8.5 1.5v3h3" fill="none" stroke="#707070"/><circle cx="10.5" cy="11.5" r="3.2" fill="#2a8ae0" stroke="#1560a8" stroke-width=".8"/></svg>
<div class="t " style="left:34.80px;top:405.00px;font-size:12px;line-height:14.00px;color:#111;letter-spacing:-0.749px;">92502769</div>
<div class="t " style="left:195.00px;top:405.00px;font-size:12px;line-height:14.00px;color:#111;letter-spacing:-0.611px;">2018.03.12 12:00:00</div>
<div class="t " style="left:357.00px;top:405.00px;font-size:12px;line-height:14.00px;color:#111;letter-spacing:0.051px;">buy</div>
<div class="t " style="left:418.50px;top:405.00px;font-size:12px;line-height:14.00px;color:#111;letter-spacing:-0.589px;">0.01</div>
<div class="t " style="left:488.00px;top:405.00px;font-size:12px;line-height:14.00px;color:#111;letter-spacing:-0.365px;">eurusd</div>
<div class="t " style="left:576.80px;top:405.00px;font-size:12px;line-height:14.00px;color:#111;letter-spacing:-0.668px;">1.23342</div>
<div class="t " style="left:668.30px;top:405.00px;font-size:12px;line-height:14.00px;color:#111;letter-spacing:-0.668px;">0.00000</div>
<div class="t " style="left:760.30px;top:405.00px;font-size:12px;line-height:14.00px;color:#111;letter-spacing:-0.668px;">1.23443</div>
<div class="t " style="left:852.30px;top:405.00px;font-size:12px;line-height:14.00px;color:#111;letter-spacing:-0.668px;">1.23120</div>
<div class="t " style="left:958.00px;top:405.00px;font-size:12px;line-height:14.00px;color:#111;letter-spacing:-0.470px;">-0.08</div>
<div class="t " style="left:1054.00px;top:405.00px;font-size:12px;line-height:14.00px;color:#111;letter-spacing:-0.589px;">0.00</div>
<div class="t " style="left:1146.00px;top:405.00px;font-size:12px;line-height:14.00px;color:#111;letter-spacing:-0.589px;">0.00</div>
<div class="t " style="left:1264.60px;top:405.00px;font-size:12px;line-height:14.00px;color:#111;letter-spacing:-0.470px;">-2.22</div>
<svg style="left:1298px;top:407.2px" width="10" height="10"><path d="M2.2 2.2L7.8 7.8M7.8 2.2L2.2 7.8" stroke="#808080" stroke-width="1.6" fill="none"/></svg>
<div class="b " style="left:13px;top:422px;width:1301px;height:20px;background:#c8c8c8;"></div>
<svg style="left:16px;top:425px" width="12" height="14"><rect x=".5" y=".5" width="10" height="12" fill="#fff" stroke="#909090"/><path d="M4 3h3v3.5h2L5.5 10 2 6.5h2z" fill="#e03010"/></svg>
<div class="t " style="left:35.50px;top:425.00px;font-size:12px;line-height:14.00px;color:#111;letter-spacing:-0.137px;font-weight:bold;">Balance: 1 000.82 USD  Equity: 998.52  Margin: 3.08  Free margin: 995.44  Margin level: 32382.16%</div>
<div class="t " style="left:1262.10px;top:425.00px;font-size:12px;line-height:14.00px;color:#111;letter-spacing:0.030px;font-weight:bold;">-2.30</div>
<div class="b " style="left:1315px;top:374px;width:3px;height:88px;background:#f8f8f8;"></div>
<div class="b " style="left:1318px;top:374px;width:1px;height:88px;background:#9a9a9a;"></div>
<div class="b " style="left:1319px;top:374px;width:17px;height:18px;background:#f2f2f2;"></div>
<div class="b" style="left:1321px;top:391px;width:13px;height:71px;background:#d4e2f2;"></div>
<div class="b " style="left:1319px;top:391px;width:2px;height:71px;background:#f6f6f6;"></div>
<div class="b " style="left:1334px;top:391px;width:1px;height:71px;background:#f6f6f6;"></div>
<div class="b " style="left:1335px;top:377px;width:6px;height:84px;background:#ffffff;border-left:1px solid #9a9a9a;border-top:1px solid #a8a8a8;"></div>
<svg style="left:1322px;top:377.3px" width="10" height="10"><path d="M2.4 2.7L7.6 7.3M7.6 2.7L2.4 7.3" stroke="#000" stroke-width="1.9" fill="none"/></svg>
<svg style="left:0;top:0" width="1341" height="460"><g fill="none" stroke="#e61c26" stroke-width="4.8"><ellipse cx="1209.7" cy="99.7" rx="19.6" ry="15.9"/><ellipse cx="1172.1" cy="134.4" rx="15.1" ry="22.8"/><ellipse cx="756.8" cy="404.4" rx="58.4" ry="34.4" stroke-width="5.2"/></g></svg>
</div></body></html>
